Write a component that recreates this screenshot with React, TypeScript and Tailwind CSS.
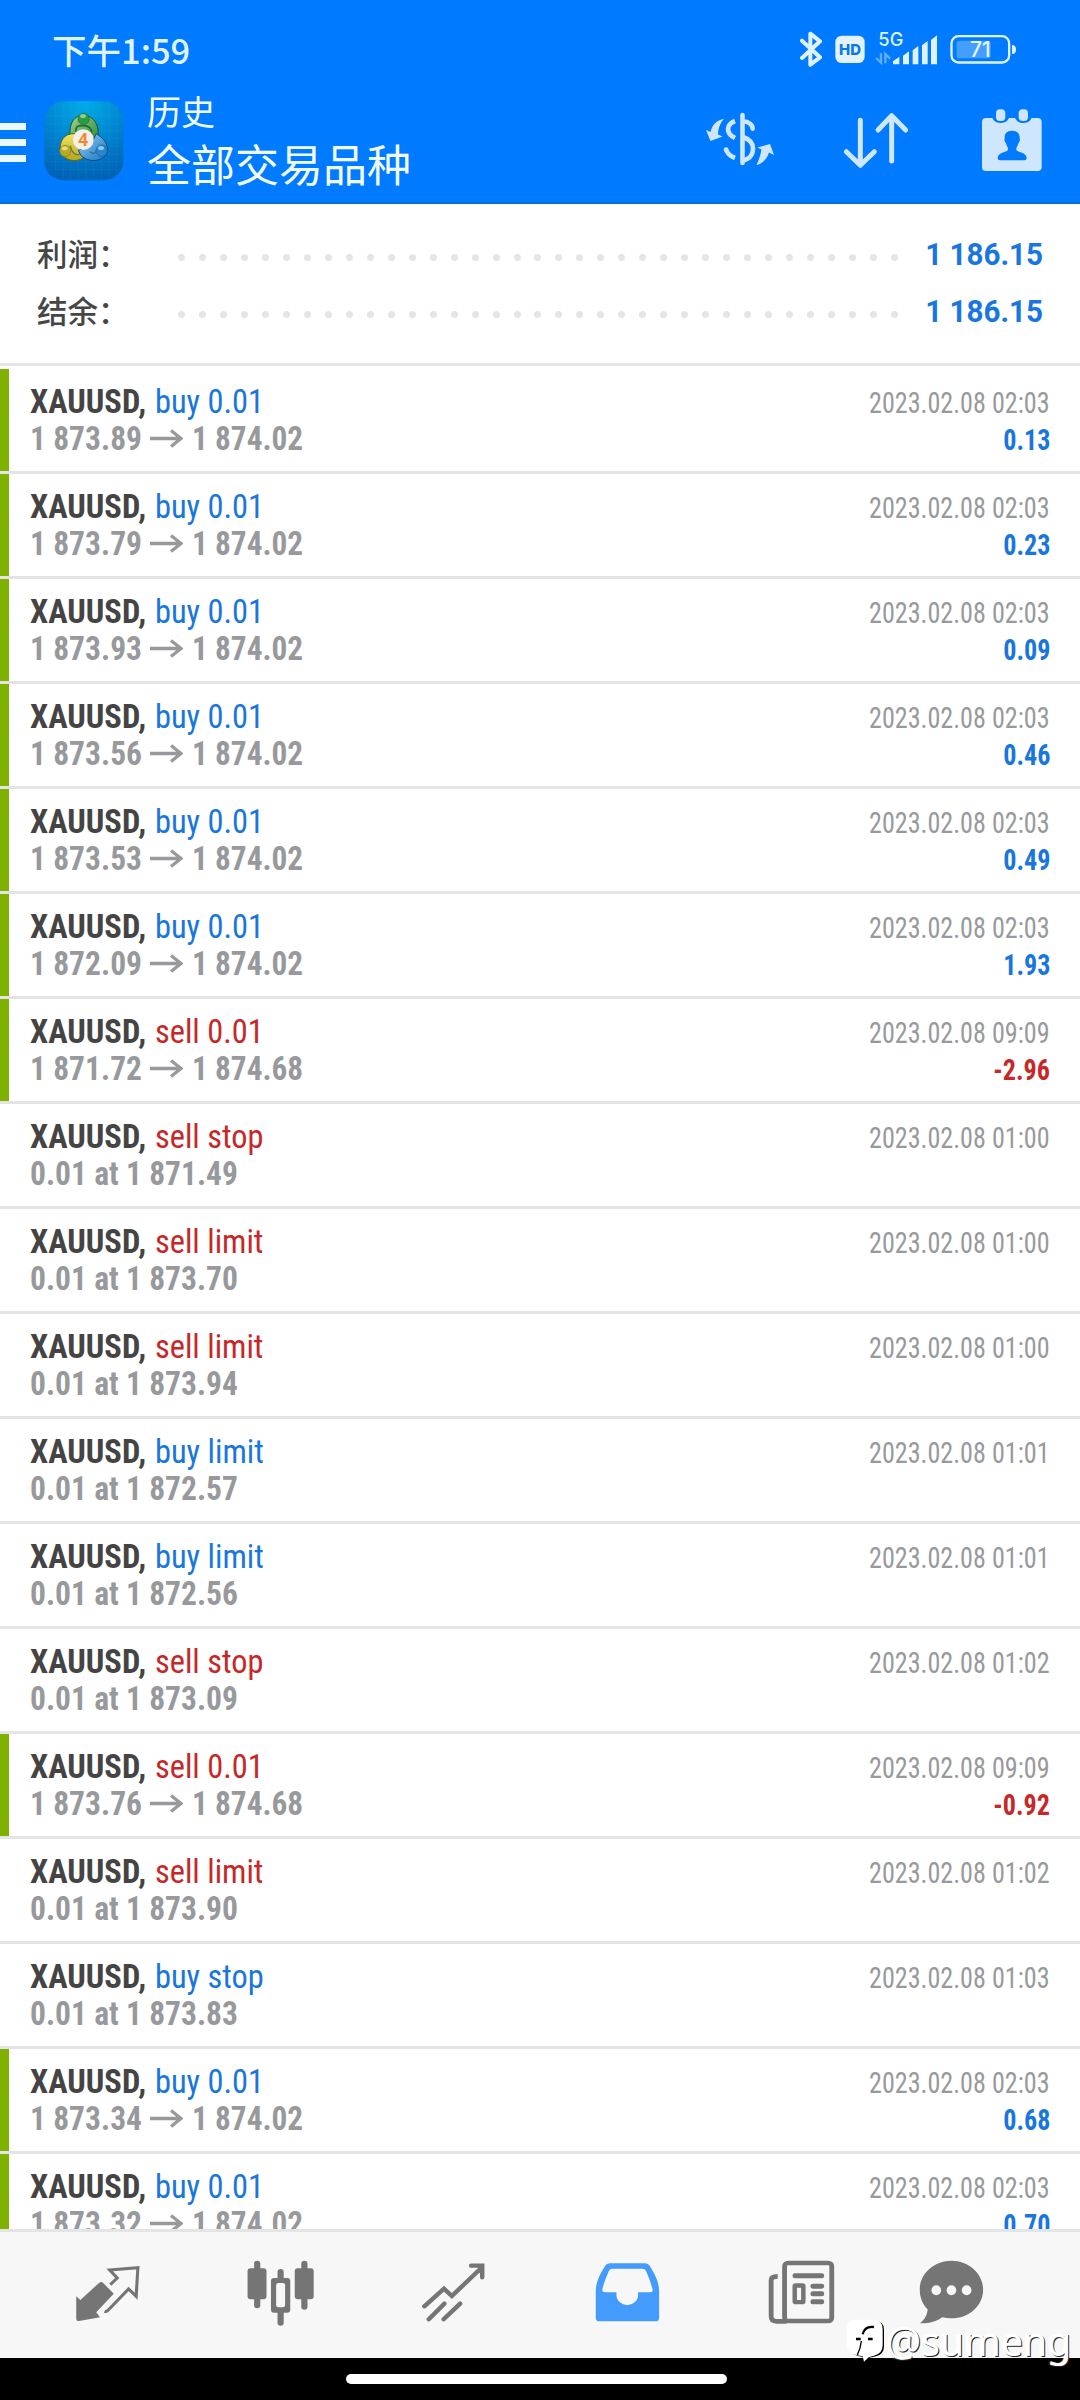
import type { ReactNode } from "react";

interface Deal {
  type: string;
  side: "buy" | "sell";
  detail: string;
  closePrice?: string;
  time: string;
  profit?: string;
}

const deals: Deal[] = [
  { type: "buy 0.01", side: "buy", detail: "1 873.89", closePrice: "1 874.02", time: "02:03", profit: "0.13" },
  { type: "buy 0.01", side: "buy", detail: "1 873.79", closePrice: "1 874.02", time: "02:03", profit: "0.23" },
  { type: "buy 0.01", side: "buy", detail: "1 873.93", closePrice: "1 874.02", time: "02:03", profit: "0.09" },
  { type: "buy 0.01", side: "buy", detail: "1 873.56", closePrice: "1 874.02", time: "02:03", profit: "0.46" },
  { type: "buy 0.01", side: "buy", detail: "1 873.53", closePrice: "1 874.02", time: "02:03", profit: "0.49" },
  { type: "buy 0.01", side: "buy", detail: "1 872.09", closePrice: "1 874.02", time: "02:03", profit: "1.93" },
  { type: "sell 0.01", side: "sell", detail: "1 871.72", closePrice: "1 874.68", time: "09:09", profit: "-2.96" },
  { type: "sell stop", side: "sell", detail: "0.01 at 1 871.49", time: "01:00" },
  { type: "sell limit", side: "sell", detail: "0.01 at 1 873.70", time: "01:00" },
  { type: "sell limit", side: "sell", detail: "0.01 at 1 873.94", time: "01:00" },
  { type: "buy limit", side: "buy", detail: "0.01 at 1 872.57", time: "01:01" },
  { type: "buy limit", side: "buy", detail: "0.01 at 1 872.56", time: "01:01" },
  { type: "sell stop", side: "sell", detail: "0.01 at 1 873.09", time: "01:02" },
  { type: "sell 0.01", side: "sell", detail: "1 873.76", closePrice: "1 874.68", time: "09:09", profit: "-0.92" },
  { type: "sell limit", side: "sell", detail: "0.01 at 1 873.90", time: "01:02" },
  { type: "buy stop", side: "buy", detail: "0.01 at 1 873.83", time: "01:03" },
  { type: "buy 0.01", side: "buy", detail: "1 873.34", closePrice: "1 874.02", time: "02:03", profit: "0.68" },
  { type: "buy 0.01", side: "buy", detail: "1 873.32", closePrice: "1 874.02", time: "02:03", profit: "0.70" },
];

const StatusBar = () => (
  <div className="flex h-[96px] items-start justify-between pl-[52px] pr-[64px] text-[#dff3ff]">
    <span className="mt-[24px] font-['Noto_Sans_CJK_SC'] text-[34.500px] leading-[50px] font-medium">下午1:59</span>
    <svg className="mt-[30px] h-[40px] w-[216px]" viewBox="360 90 648 120">
      <path d="M366 122L420 172L391 194V101L420 124L366 174" fill="none" stroke="#dff3ff" strokeWidth="12" strokeLinejoin="round" strokeLinecap="round" />
      <rect x="466" y="107" width="88" height="82" rx="19" fill="#e2f3ff" />
      <text x="510" y="165" textAnchor="middle" fontSize="45" fontWeight="800" fill="#0879e8" fontFamily="Inter, sans-serif" textLength="66" lengthAdjust="spacingAndGlyphs">HD</text>
      <text x="595" y="138" fontSize="55" fontWeight="500" fill="#dff3ff" fontFamily="Inter, sans-serif" textLength="75" lengthAdjust="spacingAndGlyphs">5G</text>
      <path d="M603 160V188L588 174M616 190V162L630 176" fill="none" stroke="#62adff" strokeWidth="7" />
      <path d="M639 193V184L658 170V193ZM669 193V167L687 154V193ZM698 193V151L715 138V193ZM726 193V136L743 123V193ZM753 193V120L771 106V193Z" fill="#dff3ff" />
      <rect x="814.500" y="108.500" width="173" height="79" rx="21" fill="none" stroke="#dff3ff" strokeWidth="7" />
      <rect x="830" y="122" width="102" height="53" rx="8" fill="#439eff" />
      <text x="901" y="171" textAnchor="middle" fontSize="66" fontWeight="500" fill="#e6f6ff" fontFamily="Inter, sans-serif" textLength="62" lengthAdjust="spacingAndGlyphs">71</text>
      <path d="M996 135Q1008 135 1008 149Q1008 162 996 162Z" fill="#dff3ff" />
    </svg>
  </div>
);

const AppLogo = () => (
  <svg className="h-[80px] w-[80px]" viewBox="13 16 240 240">
    <defs>
      <radialGradient id="logoBg" cx="50%" cy="0%" r="100%">
        <stop offset="0" stopColor="#00aee8" />
        <stop offset="0.55" stopColor="#0083cf" />
        <stop offset="1" stopColor="#0062b4" />
      </radialGradient>
      <linearGradient id="green" x1="0" y1="0" x2="1" y2="1">
        <stop offset="0" stopColor="#a3d391" />
        <stop offset="1" stopColor="#278a36" />
      </linearGradient>
      <linearGradient id="yellow" x1="0" y1="0" x2="0" y2="1">
        <stop offset="0" stopColor="#efe66a" />
        <stop offset="1" stopColor="#b5a51c" />
      </linearGradient>
      <linearGradient id="blue" x1="0" y1="0" x2="1" y2="1">
        <stop offset="0" stopColor="#8fd0f5" />
        <stop offset="1" stopColor="#1a72bd" />
      </linearGradient>
    </defs>
    <rect x="14" y="17" width="237" height="237" rx="58" fill="url(#logoBg)" />
    <path d="M47 20V252M70 18V253M93 18V253M116 18V253M139 18V253M162 18V253M185 18V253M208 18V253M231 22V250M16 60H250M15 83H251M15 106H251M15 129H251M15 152H251M15 175H251M15 198H251M16 221H248" stroke="#5cc0f0" strokeOpacity="0.13" strokeWidth="2" />
    <g strokeWidth="3">
      <path d="M92 122C86 84 104 58 132 58C162 60 182 90 174 128L148 140L110 132Z" fill="url(#green)" stroke="#175a2a" />
      <path d="M106 114C72 112 58 138 62 170C76 196 108 202 132 186L140 160L118 140Z" fill="url(#yellow)" stroke="#6b6410" />
      <path d="M170 114C190 126 206 144 204 168C190 200 150 202 124 180L116 164L152 150Z" fill="url(#blue)" stroke="#0d4a85" />
      <path d="M108 108C108 88 118 90 132 90C148 90 156 98 156 114" fill="none" stroke="#1f6e2c" strokeWidth="5" />
      <path d="M92 150C96 172 108 180 120 176M152 168C160 178 168 172 174 160" fill="none" stroke="#24506a" strokeOpacity="0.6" strokeWidth="4" />
    </g>
    <circle cx="132" cy="70" r="17" fill="#2f9a45" stroke="#1d6e2f" strokeWidth="2" />
    <ellipse cx="130" cy="61" rx="9" ry="6" fill="#a5dba0" fillOpacity="0.8" />
    <circle cx="77" cy="166" r="17" fill="#b9aa25" stroke="#7e7413" strokeWidth="2" />
    <ellipse cx="75" cy="158" rx="9" ry="6" fill="#f0e98a" fillOpacity="0.8" />
    <circle cx="186" cy="165" r="17" fill="#2c86cc" stroke="#155c9a" strokeWidth="2" />
    <ellipse cx="184" cy="157" rx="9" ry="6" fill="#a6dcfa" fillOpacity="0.8" />
    <circle cx="131" cy="132" r="31" fill="#f3efec" />
    <text x="131" y="151" textAnchor="middle" fontSize="52" fontWeight="700" fill="#f08a2c" fontFamily="Open Sans, sans-serif">4</text>
  </svg>
);

const Header = () => (
  <header className="h-[204px] border-b-2 border-[#0b6dd6] bg-[#007aff]">
    <StatusBar />
    <div className="flex h-[106px] items-start">
      <div className="mt-[27px] flex w-[26px] flex-col gap-[9px]">
        <div className="h-[7px] bg-[#ecf8ff]" />
        <div className="h-[7px] bg-[#ecf8ff]" />
        <div className="h-[7px] bg-[#ecf8ff]" />
      </div>
      <div className="mt-[5px] ml-[18px]">
        <AppLogo />
      </div>
      <div className="ml-[23px] flex w-[540px] flex-col text-[#f0fbff]">
        <span className="-mt-[8px] text-[34px] leading-[50px]">历史</span>
        <span className="-mt-[1px] text-[44px] leading-[60px]">全部交易品种</span>
      </div>
      <div className="mt-[4px] flex">
        {/* currency filter */}
        <svg className="ml-[13px] h-[80px] w-[80px]" viewBox="0 0 80 80">
          <g fill="none" stroke="#cfe6ff" strokeWidth="4.600">
            <path d="M42.500 15V63" strokeLinecap="round" />
            <path d="M43 21.200C49 21.500 52.800 25 52.600 28.600" strokeLinecap="round" />
            <path d="M35 21C27.500 24 26.500 30 30 34.500C31.500 36.300 33 37 35 38" />
            <path d="M43 37C49 39 53 43 53 48.500C53 55 49 59.500 43 60.500" />
            <path d="M26 49.500C27.500 54 31 56.500 35 58" />
          </g>
          <circle cx="26" cy="49.500" r="2.300" fill="#cfe6ff" />
          <path d="M24 19C16.500 20 12 25 10.500 32L6 30L10.500 41L22.500 36.500L18 34.500C18 29 20 23 24 19Z" fill="#cfe6ff" />
          <path d="M56.500 65C59 60 60.500 55 61.500 49.500L57.500 47.500L70 44L74 55L69 52.500C67.500 58 63 63.500 56.500 65Z" fill="#cfe6ff" />
        </svg>
        <svg className="mt-[10px] ml-[60px] h-[60px] w-[70px]" viewBox="480 330 210 180">
          <path d="M541 361V494M499 455L541 496L583 455M635 483V349M594 390L635 347L677 390" fill="none" stroke="#cfe6ff" strokeWidth="15" strokeLinecap="round" strokeLinejoin="round" />
        </svg>
        <svg className="mt-[7px] ml-[70px] h-[66px] w-[66px]" viewBox="900 321 198 198">
          <rect x="906" y="354" width="179" height="159" rx="12" fill="#cfe6ff" />
          <path d="M938 350V356Q946 369 962 369Q978 369 986 356V350ZM1006 350V356Q1014 369 1030 369Q1046 369 1054 356V350Z" fill="#007aff" />
          <rect x="948" y="328" width="28" height="35" rx="12" fill="#cfe6ff" />
          <rect x="1016" y="328" width="28" height="35" rx="12" fill="#cfe6ff" />
          <path d="M996 392C1013 392 1020 402 1019 416C1021 420 1019 426 1015 430C1014 438 1008 441 1009 449C1012 458 1040 456 1040 474Q1040 481 1033 481H960Q953 481 953 474C953 456 980 458 984 449C985 441 979 438 978 430C974 426 972 420 974 416C973 402 979 392 996 392Z" fill="#007aff" />
        </svg>
      </div>
    </div>
  </header>
);

const SummaryRow = ({ label, value }: { label: string; value: string }) => (
  <div className="flex h-[57px] items-center pr-[37px] pl-[37px]">
    <span className="-mt-[2px] w-[141px] font-['Noto_Sans_CJK_SC'] text-[30.500px] font-medium text-[#464646]">{label}</span>
    <div className="mt-[6px] flex w-[720px] justify-between">
      {Array.from({ length: 35 }, (_, i) => (
        <span key={i} className="h-[7px] w-[7px] rounded-full bg-[#e5e5e5]" />
      ))}
    </div>
    <span className="mt-[2px] flex-1 origin-right scale-x-[.955] text-right font-[Roboto] text-[31px] font-bold whitespace-nowrap text-[#1976df]">{value}</span>
  </div>
);

const DealRow = ({ deal }: { deal: Deal }) => {
  const color = deal.side === "buy" ? "text-[#1976dc]" : "text-[#c62828]";
  const profitColor = deal.profit?.startsWith("-") ? "text-[#c62828]" : "text-[#1976dc]";

  return (
    <div className="flex h-[105px] shrink-0 border-b-[3px] border-[#e4e4e4] font-[Roboto] [font-stretch:75%]">
      <div className={deal.profit ? "w-[8.500px] bg-[#7fb100]" : "w-[8.500px]"} />
      <div className="flex flex-1 justify-between pr-[30px] pl-[21.500px]">
        <div className="flex flex-col pt-[14px] text-[34px] leading-[37px]">
          <div className="flex gap-[8px] whitespace-nowrap">
            <span className="w-[117px] origin-left scale-x-[.955] font-bold text-[#444]">XAUUSD,</span>
            <span className={`origin-left scale-x-[.952] ${color}`}>{deal.type}</span>
          </div>
          <div className="flex items-center font-bold whitespace-nowrap text-[#98999c]">
            <span className="origin-left scale-x-[.927]">{deal.detail}</span>
            {deal.closePrice && (
              <>
                <svg className="mr-[9px] -ml-[1px] h-[20px] w-[33px]" viewBox="0 0 33 20">
                  <path d="M0 9.500H31M21 1.500L31 9.500L21 17.500" fill="none" stroke="#98999c" strokeWidth="3.300" />
                </svg>
                <span className="origin-left scale-x-[.92]">{deal.closePrice}</span>
              </>
            )}
          </div>
        </div>
        <div className="flex flex-col items-end pt-[16px] text-[29px] leading-[37px]">
          <span className="origin-right scale-x-[.9] whitespace-nowrap text-[#98999c]">2023.02.08 {deal.time}</span>
          {deal.profit && <span className={`origin-right scale-x-[.9] font-bold ${profitColor}`}>{deal.profit}</span>}
        </div>
      </div>
    </div>
  );
};

const NavIcon = ({ cx, children }: { cx: number; children: ReactNode }) => (
  <svg className="h-[66.667px] w-[68.900px] overflow-visible" viewBox={`${cx - 100} 395 200 200`} preserveAspectRatio="none">
    {children}
  </svg>
);

const BottomNav = () => (
  <nav className="flex h-[129px] shrink-0 items-center border-t-[3px] border-[#e4e4e4] bg-[#f7f7f7] pl-[20.500px]">
    <div className="flex w-[173px] justify-center">
      <NavIcon cx={311.6}>
        <path d="M297 456L330 490L279 546L290 561L229 572Q221 573 221 565V498L233 509L288 457Q293 453 297 456Z" fill="#757575" />
        <path d="M320 463L340 443L318 419L400 412L395 498L373 476L312 541Q308 545 303 543" fill="none" stroke="#757575" strokeWidth="9" />
      </NavIcon>
    </div>
    <div className="flex w-[173px] justify-center">
      <NavIcon cx={812.5}>
        <g fill="#757575">
          <rect x="736" y="391" width="18" height="143" rx="9" />
          <rect x="717" y="414" width="55" height="93" rx="9" />
          <rect x="873" y="391" width="18" height="147" rx="9" />
          <rect x="854" y="414" width="55" height="93" rx="9" />
          <rect x="804" y="416" width="18" height="170" rx="9" />
          <rect x="785" y="443" width="56" height="104" rx="9" />
        </g>
        <rect x="800" y="458" width="26" height="73" rx="7" fill="#f7f7f7" />
      </NavIcon>
    </div>
    <div className="flex w-[174px] justify-center">
      <NavIcon cx={1315.5}>
        <path d="M1231 528L1288 475L1311 497L1397 412M1367 406H1399V441M1244 567L1289 520M1287 567L1335 520" fill="none" stroke="#757575" strokeWidth="13" strokeLinecap="round" />
      </NavIcon>
    </div>
    <div className="flex w-[174px] justify-center">
      <NavIcon cx={253}>
        <path fillRule="evenodd" d="M202 399H304Q314 399 318 407C337 438 345 459 345 485V562Q345 573 334 573H172Q161 573 161 562V485C161 459 169 438 188 407Q192 399 202 399ZM210 415Q202 415 199 422C190 443 184 461 180 477Q179 486 187 486H221V493A31.500 31.500 0 0 0 284 493V486H319Q328 486 326 477C322 461 316 443 307 422Q304 415 296 415Z" fill="#439cfc" />
      </NavIcon>
    </div>
    <div className="flex w-[174.500px] justify-center">
      <NavIcon cx={759}>
        <g fill="none" stroke="#757575" strokeWidth="14">
          <rect x="710" y="398" width="137" height="174" rx="10" />
          <path d="M690 438Q671 438 671 450V558Q671 573 686 573H716" />
        </g>
        <rect x="733" y="429" width="92" height="15" rx="7" fill="#757575" />
        <rect x="739.500" y="465.500" width="25" height="50" rx="3" fill="none" stroke="#757575" strokeWidth="13" />
        <rect x="785" y="460" width="40" height="15" rx="7" fill="#757575" />
        <rect x="785" y="483" width="40" height="15" rx="7" fill="#757575" />
        <rect x="785" y="507" width="40" height="15" rx="7" fill="#757575" />
      </NavIcon>
    </div>
    <div className="flex w-[124px] justify-center">
      <NavIcon cx={1193}>
        <path d="M1193 391C1244 391 1285 430 1285 478C1285 526 1244 564 1193 564Q1180 564 1166 561C1148 574 1128 580 1102 579C1115 568 1123 554 1124 537C1109 522 1101 501 1101 478C1101 430 1142 391 1193 391Z" fill="#757575" />
        <ellipse cx="1149" cy="480" rx="14" ry="15" fill="#f7f7f7" />
        <ellipse cx="1193" cy="480" rx="14" ry="15" fill="#f7f7f7" />
        <ellipse cx="1237" cy="480" rx="14" ry="15" fill="#f7f7f7" />
      </NavIcon>
    </div>
  </nav>
);

const Watermark = () => (
  <div className="absolute top-[2317px] left-[846px] flex">
    <svg className="h-[48px] w-[40px]" viewBox="18 24 120 144">
      <path d="M58 36H104Q132 36 132 62V112Q132 136 108 142L88 146L72 162L68 144L52 140Q26 134 26 108V60Q26 36 58 36Z" fill="#000" />
      <path d="M52 32H98Q128 32 128 60V108Q128 134 102 140L86 145L72 158L68 142L48 138Q20 132 20 104V60Q20 32 52 32Z" fill="#fff" />
      <path d="M102 54Q74 50 68 76M48 90H62M84 90H98" fill="none" stroke="#000" strokeWidth="7" />
      <path d="M64 96Q62 118 52 138" fill="none" stroke="#000" strokeWidth="4" />
    </svg>
    <span className="font-['Noto_Sans'] text-[40px] leading-[48px] text-white [text-shadow:1px_1px_0_#222,-1px_0_1px_#fff]">
      <span className="inline-block origin-left scale-x-[.98]">@sumeng</span>
    </span>
  </div>
);

export default function App() {
  return (
    <div className="relative flex h-[2400px] w-[1080px] flex-col overflow-hidden bg-white font-[Roboto,'Noto_Sans_CJK_SC',sans-serif]">
      <Header />
      <section className="h-[162px] shrink-0 border-b-[3px] border-[#e4e4e4] pt-[22px]">
        <SummaryRow label="利润：" value="1 186.15" />
        <SummaryRow label="结余：" value="1 186.15" />
      </section>
      <main className="flex h-[1863px] shrink-0 flex-col overflow-hidden pt-[3px]">
        {deals.map((deal, i) => (
          <DealRow key={i} deal={deal} />
        ))}
      </main>
      <BottomNav />
      <footer className="flex h-[42px] justify-center bg-black pt-[16px] pr-[7px]">
        <div className="h-[10px] w-[381px] rounded-full bg-white" />
      </footer>
      <Watermark />
    </div>
  );
}
